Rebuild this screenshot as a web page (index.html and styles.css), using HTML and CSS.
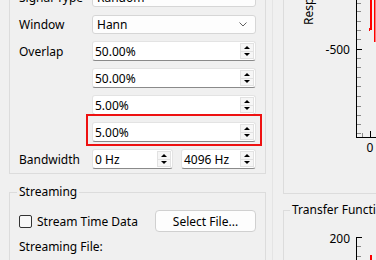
FILE: index.html
```html
<!DOCTYPE html>
<html lang="en">

<head>
    <meta charset="UTF-8">
    <meta name="viewport" content="width=device-width, initial-scale=1.0">
    <title>Analyzer Settings</title>
    <link rel="stylesheet" href="styles.css">
</head>

<body>
    <div class="app">
        <div class="left">
            <div class="group settings">
                <div class="row combo-row">
                    <span class="label">Signal Type</span>
                    <div class="combo"><span>Random</span><svg class="chevron" width="8" height="5" viewBox="0 0 8 5"><polyline points="0.5,0.5 4,4 7.5,0.5" /></svg></div>
                </div>
                <div class="row combo-row">
                    <span class="label">Window</span>
                    <div class="combo"><span>Hann</span><svg class="chevron" width="8" height="5" viewBox="0 0 8 5"><polyline points="0.5,0.5 4,4 7.5,0.5" /></svg></div>
                </div>
                <div class="row">
                    <span class="label">Overlap</span>
                    <div class="spin"><span>50.00%</span><span class="spin-btns"><i class="up"></i><i class="down"></i></span></div>
                </div>
                <div class="row">
                    <span class="label"></span>
                    <div class="spin"><span>50.00%</span><span class="spin-btns"><i class="up"></i><i class="down"></i></span></div>
                </div>
                <div class="row">
                    <span class="label"></span>
                    <div class="spin"><span>5.00%</span><span class="spin-btns"><i class="up"></i><i class="down"></i></span></div>
                </div>
                <div class="row">
                    <span class="label"></span>
                    <div class="spin marked"><span>5.00%</span><span class="spin-btns"><i class="up"></i><i class="down"></i></span></div>
                </div>
                <div class="row">
                    <span class="label">Bandwidth</span>
                    <div class="spin lo"><span>0 Hz</span><span class="spin-btns"><i class="up"></i><i class="down"></i></span></div>
                    <div class="spin hi"><span>4096 Hz</span><span class="spin-btns"><i class="up"></i><i class="down"></i></span></div>
                </div>
            </div>

            <fieldset class="group streaming">
                <legend>Streaming</legend>
                <div class="stream-row">
                    <span class="check"></span>
                    <span class="check-text">Stream Time Data</span>
                    <button class="btn">Select File...</button>
                </div>
                <div class="file-row">Streaming File:</div>
            </fieldset>
        </div>

        <div class="right">
            <div class="group plot-group">
                <svg class="plot" width="198" height="222" viewBox="0 0 198 222">
                    <text class="axis-title" transform="translate(29,54) rotate(-90)">Response (dB)</text>
                    <g class="minor">
                        <line x1="73" y1="5.5" x2="77" y2="5.5" />
                        <line x1="73" y1="14.5" x2="77" y2="14.5" />
                        <line x1="73" y1="23.5" x2="77" y2="23.5" />
                        <line x1="73" y1="32.5" x2="77" y2="32.5" />
                        <line x1="73" y1="40.5" x2="77" y2="40.5" />
                        <line x1="73" y1="50.5" x2="77" y2="50.5" />
                        <line x1="73" y1="59.5" x2="77" y2="59.5" />
                        <line x1="73" y1="68.5" x2="77" y2="68.5" />
                        <line x1="73" y1="87.5" x2="77" y2="87.5" />
                        <line x1="73" y1="96.5" x2="77" y2="96.5" />
                        <line x1="73" y1="106.5" x2="77" y2="106.5" />
                        <line x1="73" y1="115.5" x2="77" y2="115.5" />
                        <line x1="73" y1="125.5" x2="77" y2="125.5" />
                        <line x1="73" y1="135.5" x2="77" y2="135.5" />
                        <line x1="73" y1="144.5" x2="77" y2="144.5" />
                        <line x1="73" y1="153.5" x2="77" y2="153.5" />
                        <line x1="73" y1="162.5" x2="77" y2="162.5" />
                        <line x1="78.5" y1="162" x2="78.5" y2="166" />
                    </g>
                    <g class="major">
                        <line x1="72.5" y1="0" x2="72.5" y2="167" />
                        <line x1="72" y1="166.5" x2="198" y2="166.5" />
                        <line x1="72" y1="78.5" x2="78" y2="78.5" />
                        <line x1="86.5" y1="160" x2="86.5" y2="166" />
                    </g>
                    <text class="tick-label" x="66" y="83" text-anchor="end">-500</text>
                    <text class="tick-label" x="86" y="181" text-anchor="middle">0</text>
                    <g class="trace">
                        <rect x="86" y="0" width="2" height="59" />
                        <rect x="85" y="57" width="1" height="3" />
                        <rect x="90" y="0" width="1.5" height="71" />
                    </g>
                </svg>
            </div>

            <fieldset class="group tf-group">
                <legend>Transfer Function</legend>
                <svg class="plot" width="198" height="60" viewBox="0 0 198 60">
                    <g class="minor">
                        <line x1="73" y1="28.5" x2="77" y2="28.5" />
                        <line x1="73" y1="38.5" x2="77" y2="38.5" />
                    </g>
                    <g class="major">
                        <line x1="72.5" y1="19" x2="72.5" y2="60" />
                        <line x1="72" y1="19.5" x2="78" y2="19.5" />
                    </g>
                    <text class="tick-label" x="66" y="25" text-anchor="end">200</text>
                    <g class="trace">
                        <rect x="86" y="37" width="2" height="23" />
                    </g>
                </svg>
            </fieldset>
        </div>
    </div>
</body>

</html>
```

FILE: styles.css
```css
* {
    box-sizing: border-box;
}

body {
    margin: 0;
    width: 376px;
    height: 260px;
    overflow: hidden;
    background-color: #f0f0f0;
    color: #000;
    font-family: "Noto Sans", sans-serif;
    font-size: 12px;
}

.app {
    display: flex;
    height: 260px;
    overflow: hidden;
}

.left {
    width: 273px;
    flex: none;
    padding-left: 9px;
    padding-right: 6px;
    border-right: 1px solid #e4e4e4;
}

.right {
    flex: 1;
    overflow: hidden;
    padding-left: 10px;
}

.group {
    border: 1px solid #dcdcdc;
}

fieldset.group {
    margin: 0;
    min-width: 0;
}

legend {
    padding: 0 2px;
    line-height: 16px;
}

/* settings form */

.settings {
    margin-top: -20px;
    padding: 7px 9px 4px 9px;
}

.row {
    display: flex;
    align-items: center;
    height: 20px;
}

.row + .row {
    margin-top: 7px;
}

.combo-row {
    height: 19px;
}

.combo-row + .combo-row {
    margin-top: 8px;
}

.label {
    width: 73px;
    flex: none;
}

.combo {
    flex: 1;
    height: 19px;
    display: flex;
    align-items: center;
    justify-content: space-between;
    padding: 0 8px 0 4px;
    background-color: #fdfdfd;
    border: 1px solid #d6d6d6;
    border-radius: 3px;
}

.chevron polyline {
    fill: none;
    stroke: #606060;
    stroke-width: 1;
}

.spin {
    flex: 1;
    height: 20px;
    display: flex;
    align-items: center;
    padding: 0 1px 0 2px;
    background-color: #fff;
    border: 1px solid #e3e3e3;
    border-bottom-color: #8a8a8a;
    border-radius: 3px;
}

.spin.lo {
    flex: none;
    width: 81px;
}

.spin.hi {
    margin-left: 8px;
}

.spin-btns {
    margin-left: auto;
    width: 14px;
    height: 16px;
    display: flex;
    flex-direction: column;
}

.spin-btns i {
    flex: 1;
    display: flex;
    align-items: center;
    justify-content: center;
    background-color: #f6f6f6;
    border: 1px solid #e2e2e2;
}

.spin-btns i + i {
    border-top: none;
}

.up::before,
.down::before {
    content: "";
    border-left: 3px solid transparent;
    border-right: 3px solid transparent;
}

.up::before {
    border-bottom: 3px solid #000;
}

.down::before {
    border-top: 3px solid #000;
}

.marked {
    position: relative;
}

.marked::after {
    content: "";
    position: absolute;
    left: -7px;
    right: -7px;
    top: -9px;
    bottom: -5px;
    border: 2px solid #ee1111;
}

/* streaming */

fieldset.streaming {
    margin-top: 10px;
    padding: 10px 9px 0 9px;
    height: 90px;
}

.streaming legend {
    margin-left: -2px;
}

.stream-row {
    display: flex;
    align-items: center;
    height: 22px;
}

.check {
    width: 13px;
    height: 13px;
    border: 1px solid #333;
    border-radius: 2px;
    background-color: #f8f8f8;
}

.check-text {
    margin-left: 5px;
}

.btn {
    margin-left: auto;
    width: 101px;
    height: 22px;
    padding: 0;
    font: inherit;
    color: #000;
    background-color: #fdfdfd;
    border: 1px solid #d0d0d0;
    border-radius: 4px;
}

.file-row {
    margin-top: 7px;
    line-height: 16px;
}

/* plots */

.plot-group {
    width: 200px;
    height: 224px;
    margin-top: -30px;
}

fieldset.tf-group {
    width: 200px;
    height: 70px;
    margin-top: 8px;
    padding: 0;
}

.tf-group legend {
    margin-left: 6px;
}

.plot {
    display: block;
}

.plot text {
    font-family: "Noto Sans", sans-serif;
    font-size: 12px;
    fill: #000;
}

.minor line {
    stroke: #8a8a8a;
    stroke-width: 1;
}

.major line {
    stroke: #000;
    stroke-width: 1;
}

.trace rect {
    fill: #ff0000;
}
```
